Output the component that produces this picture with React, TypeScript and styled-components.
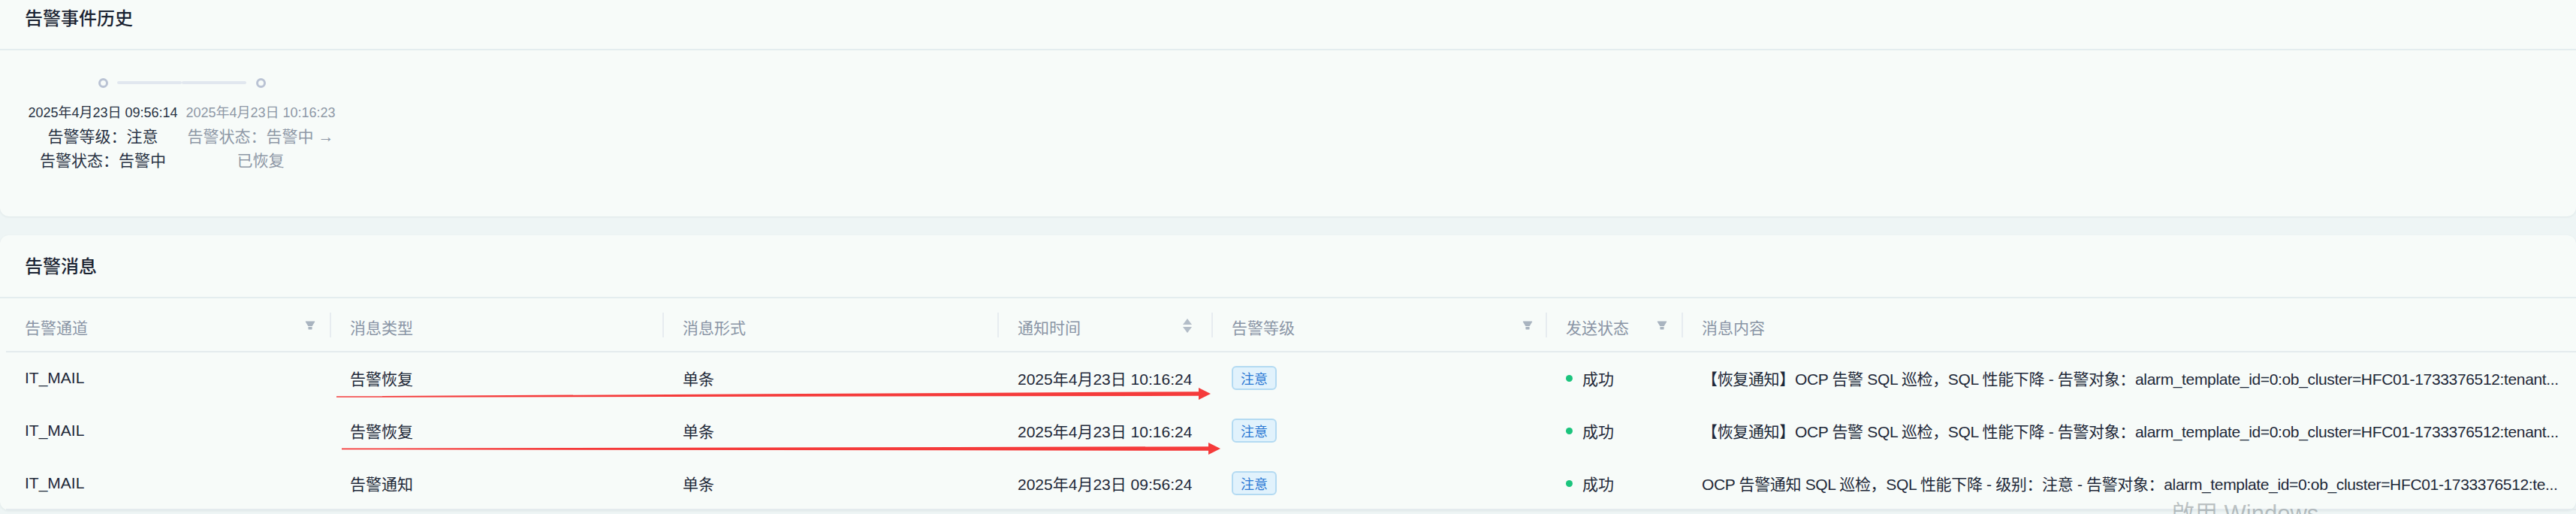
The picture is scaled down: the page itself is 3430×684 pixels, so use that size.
import React from 'react';
import styled, { createGlobalStyle } from 'styled-components';

const GlobalStyle = createGlobalStyle`
  html, body {
    margin: 0;
    padding: 0;
    background: #eef5f5;
  }
  body {
    font-family: 'Liberation Sans', 'Noto Sans CJK SC', sans-serif;
    overflow: hidden;
  }
`;

const Page = styled.div`
  position: relative;
  display: flex;
  flex-direction: column;
  width: 3430px;
  height: 684px;
  overflow: hidden;
`;

const Card = styled.section<{ $offset: number }>`
  background: #f7fbf9;
  border-radius: 12px;
  box-shadow: 0 1px 3px rgba(40, 70, 80, 0.08);
  margin-top: ${(p) => p.$offset}px;
  flex: none;
`;

const CardHeader = styled.header`
  box-sizing: border-box;
  height: 84px;
  padding: 24px 33px 0;
  border-bottom: 2px solid #e4edef;
`;

const CardTitle = styled.h2`
  margin: 0;
  font-size: 24px;
  line-height: 36px;
  font-weight: 500;
  color: #1a2332;
`;

const StepsBody = styled.div`
  display: flex;
  padding: 36px 0 59px 32px;
`;

const Step = styled.div`
  width: 210px;
  display: flex;
  flex-direction: column;
  align-items: center;
  text-align: center;
`;

const StepHead = styled.div`
  display: flex;
  align-items: center;
  width: 100%;
  height: 14px;
`;

const Tail = styled.span<{ $show: boolean; $left?: number; $right?: number }>`
  flex: 1;
  height: 4px;
  border-radius: 2px;
  margin-left: ${(p) => p.$left ?? 0}px;
  margin-right: ${(p) => p.$right ?? 0}px;
  background: ${(p) => (p.$show ? '#e1e7ef' : 'transparent')};
`;

const Dot = styled.span`
  flex: none;
  box-sizing: border-box;
  width: 13px;
  height: 13px;
  border: 3px solid #bac3d4;
  border-radius: 50%;
  background: #f7fbf9;
`;

const StepTime = styled.div<{ $done: boolean }>`
  margin-top: 20px;
  font-size: 18px;
  line-height: 27px;
  white-space: nowrap;
  color: ${(p) => (p.$done ? '#283243' : '#8e98a6')};
`;

const StepDesc = styled.div<{ $done: boolean }>`
  margin-top: 2px;
  width: 100%;
  font-size: 21px;
  line-height: 31.5px;
  color: ${(p) => (p.$done ? '#283243' : '#8e98a6')};
`;

const TableWrap = styled.div`
  padding-left: 8px;
`;

const Grid = styled.div`
  display: grid;
  grid-template-columns: 433px 443px 446px 285px 445px 181px minmax(0, 1fr);
`;

const HeadCell = styled.div`
  box-sizing: border-box;
  height: 72px;
  display: flex;
  align-items: center;
  padding: 5px 0 0 25px;
  border-bottom: 2px solid #e4ebee;
  font-size: 21px;
  color: #8a95a6;
  white-space: nowrap;
`;

const HeadLabel = styled.span`
  flex: 1;
`;

const HeadDivider = styled.span`
  flex: none;
  width: 2px;
  height: 33px;
  margin-top: -5px;
  background: #e7ecf0;
`;

const IconSlot = styled.span<{ $gap: number }>`
  display: flex;
  margin-right: ${(p) => p.$gap}px;
  margin-top: -3px;
`;

const BodyCell = styled.div<{ $last: boolean }>`
  box-sizing: border-box;
  height: 70px;
  min-width: 0;
  display: flex;
  align-items: center;
  padding: 0 12px 0 25px;
  border-bottom: 2px solid ${(p) => (p.$last ? '#e4ebee' : 'transparent')};
  font-size: 21px;
  color: #1e2838;
  white-space: nowrap;
`;

const Ellipsis = styled.span`
  min-width: 0;
  overflow: hidden;
  text-overflow: ellipsis;
  letter-spacing: -0.35px;
`;

const LevelTag = styled.span`
  display: inline-flex;
  align-items: center;
  box-sizing: border-box;
  height: 32px;
  padding: 0 10px;
  border: 2px solid #b3daf2;
  border-radius: 6px;
  background: #e1f2fc;
  color: #2b78d3;
  font-size: 18px;
`;

const StatusDot = styled.span`
  flex: none;
  width: 9px;
  height: 9px;
  border-radius: 50%;
  background: #1bc47d;
  margin-right: 13px;
`;

const Overlay = styled.svg`
  position: absolute;
  left: 0;
  top: 0;
  pointer-events: none;
`;

const Watermark = styled.div`
  position: absolute;
  left: 2891px;
  top: 668px;
  font-size: 31px;
  line-height: 1;
  color: rgba(110, 120, 125, 0.45);
  white-space: nowrap;
  pointer-events: none;
`;

const FilterIcon = () => (
  <svg width="14" height="14" viewBox="64 64 896 896" fill="#a9b4c0">
    <path d="M349 838c0 17.7 14.2 32 31.8 32h262.4c17.6 0 31.8-14.3 31.8-32V642H349v196zm531.1-684H143.9c-24.5 0-39.8 26.7-27.5 48l221.3 376h348.8l221.3-376c12.1-21.3-3.2-48-27.7-48z" />
  </svg>
);

const SortIcon = () => (
  <svg width="12" height="19" viewBox="0 0 12 19" fill="#b3bdc8">
    <polygon points="6,0 12,8 0,8" />
    <polygon points="0,11 12,11 6,19" />
  </svg>
);

type Col = { title: string; icon?: 'filter' | 'sort'; gap?: number };

const columns: Col[] = [
  { title: '告警通道', icon: 'filter', gap: 19 },
  { title: '消息类型' },
  { title: '消息形式' },
  { title: '通知时间', icon: 'sort', gap: 26 },
  { title: '告警等级', icon: 'filter', gap: 17 },
  { title: '发送状态', icon: 'filter', gap: 19 },
  { title: '消息内容' },
];

const steps = [
  { time: '2025年4月23日 09:56:14', lines: ['告警等级：注意', '告警状态：告警中'], done: true },
  { time: '2025年4月23日 10:16:23', lines: ['告警状态：告警中 → 已恢复'], done: false },
];

const rows = [
  {
    channel: 'IT_MAIL',
    type: '告警恢复',
    form: '单条',
    time: '2025年4月23日 10:16:24',
    level: '注意',
    status: '成功',
    content:
      '【恢复通知】OCP 告警 SQL 巡检，SQL 性能下降 - 告警对象：alarm_template_id=0:ob_cluster=HFC01-1733376512:tenant...',
  },
  {
    channel: 'IT_MAIL',
    type: '告警恢复',
    form: '单条',
    time: '2025年4月23日 10:16:24',
    level: '注意',
    status: '成功',
    content:
      '【恢复通知】OCP 告警 SQL 巡检，SQL 性能下降 - 告警对象：alarm_template_id=0:ob_cluster=HFC01-1733376512:tenant...',
  },
  {
    channel: 'IT_MAIL',
    type: '告警通知',
    form: '单条',
    time: '2025年4月23日 09:56:24',
    level: '注意',
    status: '成功',
    content:
      'OCP 告警通知 SQL 巡检，SQL 性能下降 - 级别：注意 - 告警对象：alarm_template_id=0:ob_cluster=HFC01-1733376512:te...',
  },
];

export default function App() {
  return (
    <>
      <GlobalStyle />
      <Page>
        <Card $offset={-17}>
          <CardHeader>
            <CardTitle>告警事件历史</CardTitle>
          </CardHeader>
          <StepsBody>
            {steps.map((s, i) => (
              <Step key={s.time}>
                <StepHead>
                  <Tail $show={i > 0} $right={13} />
                  <Dot />
                  <Tail $show={i < steps.length - 1} $left={12} />
                </StepHead>
                <StepTime $done={s.done}>{s.time}</StepTime>
                <StepDesc $done={s.done}>
                  {s.lines.map((l) => (
                    <div key={l}>{l}</div>
                  ))}
                </StepDesc>
              </Step>
            ))}
          </StepsBody>
        </Card>

        <Card $offset={25}>
          <CardHeader>
            <CardTitle>告警消息</CardTitle>
          </CardHeader>
          <TableWrap>
            <Grid>
              {columns.map((c, i) => (
                <HeadCell key={c.title}>
                  <HeadLabel>{c.title}</HeadLabel>
                  {c.icon && (
                    <IconSlot $gap={c.gap ?? 19}>{c.icon === 'sort' ? <SortIcon /> : <FilterIcon />}</IconSlot>
                  )}
                  {i < columns.length - 1 && <HeadDivider />}
                </HeadCell>
              ))}
              {rows.map((r, i) => {
                const last = i === rows.length - 1;
                return (
                  <React.Fragment key={i}>
                    <BodyCell $last={last}>{r.channel}</BodyCell>
                    <BodyCell $last={last}>{r.type}</BodyCell>
                    <BodyCell $last={last}>{r.form}</BodyCell>
                    <BodyCell $last={last}>{r.time}</BodyCell>
                    <BodyCell $last={last}>
                      <LevelTag>{r.level}</LevelTag>
                    </BodyCell>
                    <BodyCell $last={last}>
                      <StatusDot />
                      {r.status}
                    </BodyCell>
                    <BodyCell $last={last}>
                      <Ellipsis>{r.content}</Ellipsis>
                    </BodyCell>
                  </React.Fragment>
                );
              })}
            </Grid>
          </TableWrap>
        </Card>

        {/* red annotation arrows drawn over the table */}
        <Overlay width="3430" height="684" viewBox="0 0 3430 684">
          <polygon
            fill="#f53b3b"
            points="448,527.3 1596,521.2 1596,516 1612,524 1596,532 1596,526.8 448,528.8"
          />
          <polygon
            fill="#f53b3b"
            points="455,596.6 1609,594.2 1609,589 1625,597 1609,605 1609,599.8 455,598.2"
          />
        </Overlay>
        <Watermark>啟用 Windows</Watermark>
      </Page>
    </>
  );
}
